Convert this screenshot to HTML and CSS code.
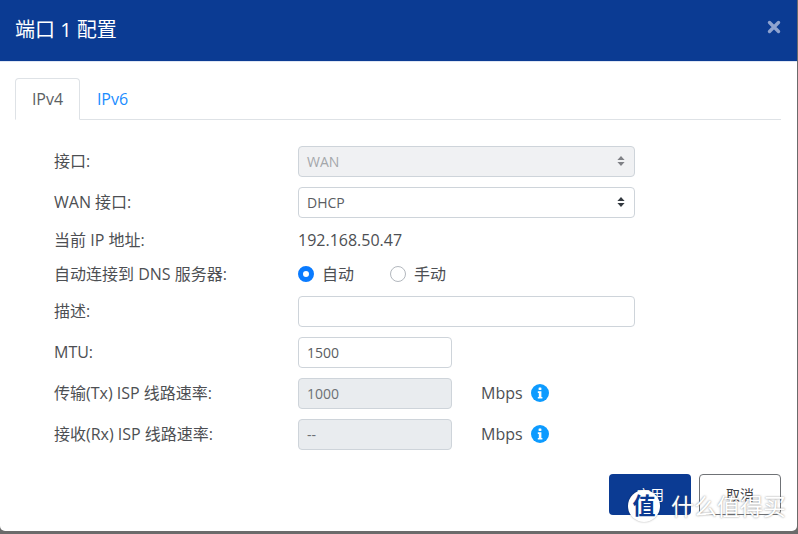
FILE: index.html
```html
<!DOCTYPE html>
<html lang="zh-CN">
<head>
<meta charset="utf-8">
<title>端口 1 配置</title>
<link rel="stylesheet" href="styles.css">
</head>
<body>
<div class="dialog">
  <header class="head">
    <h1 class="title">端口 1 配置</h1>
    <svg class="close" width="14" height="14" viewBox="0 0 14 14"><path d="M2.5 2.5l9 9M11.5 2.5l-9 9" stroke="#8fa3cf" stroke-width="3.4" stroke-linecap="round"/></svg>
  </header>
  <div class="content">
    <nav class="tabs">
      <span class="tab active">IPv4</span>
      <span class="tab link">IPv6</span>
    </nav>
    <form class="form">
      <div class="row">
        <span class="label">接口:</span>
        <div class="control wide disabled"><span>WAN</span>
          <svg class="updown" width="8" height="12" viewBox="0 0 8 12"><path d="M4 1l3.6 4H.4zM4 11L.4 7h7.2z" fill="#7f8186"/></svg>
        </div>
      </div>
      <div class="row">
        <span class="label">WAN 接口:</span>
        <div class="control wide"><span>DHCP</span>
          <svg class="updown" width="8" height="12" viewBox="0 0 8 12"><path d="M4 1l3.6 4H.4zM4 11L.4 7h7.2z" fill="#343a40"/></svg>
        </div>
      </div>
      <div class="row short">
        <span class="label">当前 IP 地址:</span>
        <span class="value">192.168.50.47</span>
      </div>
      <div class="row short">
        <span class="label">自动连接到 DNS 服务器:</span>
        <div class="radios">
          <span class="radio"><i class="dot on"></i>自动</span>
          <span class="radio"><i class="dot"></i>手动</span>
        </div>
      </div>
      <div class="row">
        <span class="label">描述:</span>
        <div class="control wide"></div>
      </div>
      <div class="row">
        <span class="label">MTU:</span>
        <div class="control narrow"><span>1500</span></div>
      </div>
      <div class="row">
        <span class="label">传输(Tx) ISP 线路速率:</span>
        <div class="control narrow ro"><span>1000</span></div>
        <span class="unit">Mbps</span>
        <svg class="info" width="18" height="18" viewBox="0 0 18 18"><circle cx="9" cy="9" r="9" fill="#0d9bff"/><rect x="7.6" y="3.4" width="2.8" height="2.6" rx=".6" fill="#fff"/><path d="M6.8 7.3h3.6v5.6h1v1.6H6.8v-1.6h1v-4h-1z" fill="#fff"/></svg>
      </div>
      <div class="row">
        <span class="label">接收(Rx) ISP 线路速率:</span>
        <div class="control narrow ro"><span>--</span></div>
        <span class="unit">Mbps</span>
        <svg class="info" width="18" height="18" viewBox="0 0 18 18"><circle cx="9" cy="9" r="9" fill="#0d9bff"/><rect x="7.6" y="3.4" width="2.8" height="2.6" rx=".6" fill="#fff"/><path d="M6.8 7.3h3.6v5.6h1v1.6H6.8v-1.6h1v-4h-1z" fill="#fff"/></svg>
      </div>
    </form>
    <footer class="actions">
      <span class="btn primary">应用</span>
      <span class="btn ghost">取消</span>
    </footer>
  </div>
  <div class="mark">
    <span class="mark-badge">值</span>
    <span class="mark-text">什么值得买</span>
  </div>
</div>
</body>
</html>
```

FILE: styles.css
```css
* { box-sizing: border-box; }
html, body { margin: 0; height: 100%; }
body {
  width: 798px;
  height: 534px;
  overflow: hidden;
  background: #6b6b6b;
  font-family: "Open Sans", "Noto Sans CJK SC", sans-serif;
  font-size: 16px;
  line-height: 24px;
  color: #4d4f53;
}
.dialog {
  position: relative;
  width: 797px;
  height: 531px;
  background: #fff;
  border-radius: 0 0 5px 5px;
  overflow: hidden;
}
.head {
  height: 62px;
  background: #0b3b93;
  border-bottom: 1px solid #dfe6f3;
  display: flex;
  align-items: center;
  justify-content: space-between;
  padding: 0 16px 1px 15px;
}
.title {
  margin: 0;
  font-size: 20px;
  font-weight: 400;
  color: #fff;
  line-height: 24px;
}
.close { margin-bottom: 7px; }
.content { padding: 16px 16px 0 15px; }
.tabs {
  display: flex;
  height: 42px;
  border-bottom: 1px solid #dee2e6;
}
.tab {
  width: 65px;
  height: 42px;
  display: flex;
  align-items: center;
  justify-content: center;
  font-size: 16px;
  border: 1px solid transparent;
  border-radius: 4px 4px 0 0;
}
.active {
  border-color: #dee2e6 #dee2e6 #fff;
  background: #fff;
  color: #5c5f64;
}
.link { color: #1a8cff; width: 65px; }
.form {
  display: flex;
  flex-direction: column;
  gap: 10px;
  padding: 26px 0 0 39px;
}
.row {
  display: flex;
  align-items: center;
  height: 31px;
}
.short { height: 24px; }
.label { width: 244px; flex: none; margin-top: -2px; }
.short .label { margin-top: 0; }
.value { color: #4d4f53; }
.control {
  height: 31px;
  display: flex;
  align-items: center;
  justify-content: space-between;
  padding: 0 9px 0 8px;
  background: #fff;
  border: 1px solid #ced4da;
  border-radius: 4px;
  font-size: 14px;
  color: #5a5d62;
}
.wide { width: 337px; }
.narrow { width: 154px; }
.disabled { background: #f0f1f3; color: #a4a7ab; }
.ro { background: #e9ecef; color: #6c7075; }
.updown { margin-top: -1px; }
.radios { display: flex; gap: 36px; }
.radio { display: flex; align-items: center; gap: 8px; }
.dot {
  width: 16px;
  height: 16px;
  border-radius: 50%;
  border: 1px solid #b3b8be;
  background: #fff;
}
.dot.on { border: 5px solid #0a7bff; }
.unit { margin-left: 29px; width: 50px; margin-top: -2px; }
.info { flex: none; margin-top: -2px; }
.actions {
  display: flex;
  justify-content: flex-end;
  gap: 8px;
  padding-top: 24px;
}
.btn {
  width: 82px;
  height: 41px;
  display: flex;
  align-items: center;
  justify-content: center;
  border-radius: 4px;
  font-size: 14px;
}
.primary { background: #0b3b93; color: #fff; }
.ghost { background: #fff; border: 1px solid #6f7276; color: #3f4246; }
.mark {
  position: absolute;
  left: 628px;
  top: 490px;
  display: flex;
  align-items: center;
  gap: 11px;
}
.mark-badge {
  width: 32px;
  height: 32px;
  border-radius: 50%;
  background: #fff;
  color: #0b3b93;
  font-size: 23px;
  font-weight: 700;
  line-height: 30px;
  text-align: center;
  box-shadow: 0 0 2px rgba(0,0,0,.35);
}
.mark-text {
  font-size: 23px;
  line-height: 30px;
  color: #fff;
  text-shadow: 0 0 2px rgba(90,90,90,.75);
  white-space: nowrap;
}
```
